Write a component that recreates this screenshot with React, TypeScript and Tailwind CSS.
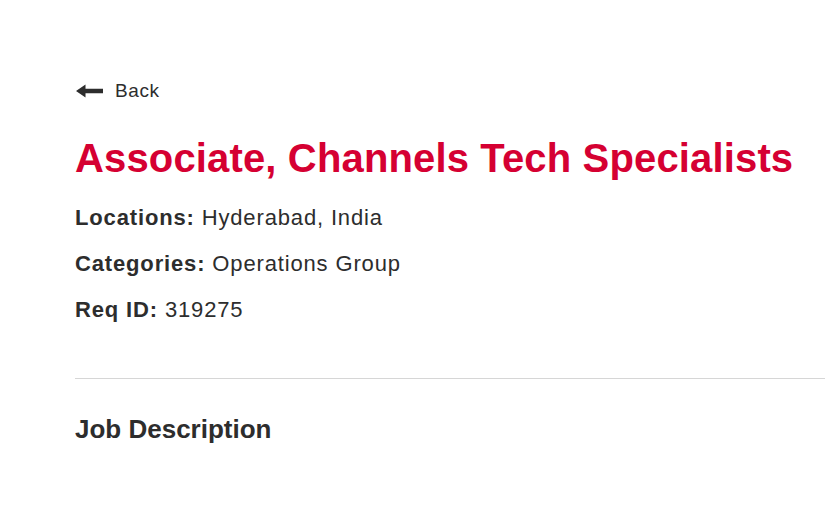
import React from "react";

export default function App() {
  return (
    <div className="w-[825px] h-[517px] bg-white overflow-hidden text-[#2d2d2d]" style={{ fontFamily: '"Liberation Sans", Arial, sans-serif' }}>
      <div className="pl-[75px] pt-[78px]">
        <a className="flex items-center gap-[12px] h-[26px] text-[19px] tracking-[0.6px] text-[#2d2d2d]">
          <svg width="27" height="14" viewBox="0 0 27 14" className="ml-[1px]">
            <path d="M0 7 L9.5 0.5 V4.8 H27 V9.2 H9.5 V13.5 Z" fill="#2d2d2d" />
          </svg>
          <span>Back</span>
        </a>
        <h1 className="mt-[30px] text-[40px] leading-[48px] font-bold text-[#d50032] tracking-[0.15px] whitespace-nowrap">
          Associate, Channels Tech Specialists
        </h1>
        <div className="mt-[13px] flex flex-col text-[22px] tracking-[0.85px] leading-[46px]">
          <p><span className="font-bold">Locations:</span> Hyderabad, India</p>
          <p><span className="font-bold">Categories:</span> Operations Group</p>
          <p><span className="font-bold">Req ID:</span> 319275</p>
        </div>
        <div className="mt-[45px] h-px bg-[#d6d6d6]" />
        <h2 className="mt-[34px] text-[26px] font-bold leading-[32px]">Job Description</h2>
      </div>
    </div>
  );
}
